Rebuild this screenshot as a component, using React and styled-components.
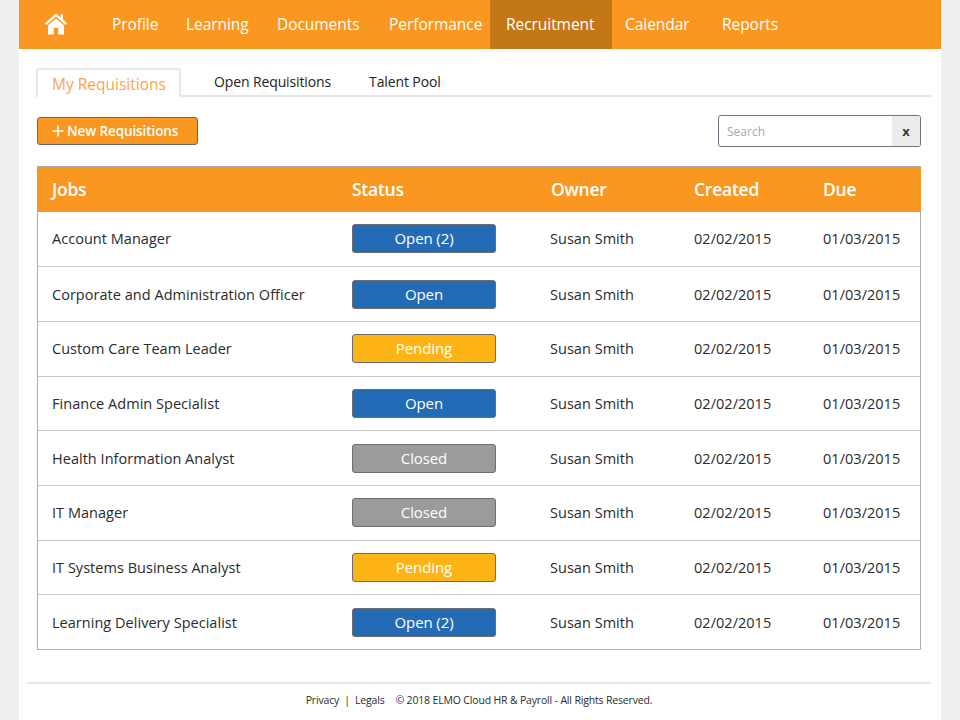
import React from "react";
import styled, { createGlobalStyle } from "styled-components";

const Global = createGlobalStyle`
  html, body { margin: 0; padding: 0; height: 720px; overflow: hidden; background: #efefef; }
  body { font-family: "Open Sans", "Noto Sans", "Liberation Sans", sans-serif; color: #2b2b2b; }
`;
const Page = styled.div`
  width: 922px; height: 720px; margin: 0 auto; background: #fff; display: flex; flex-direction: column;
`;
const Nav = styled.nav`
  height: 48.5px; background: #f99721; display: flex; flex: none;
`;
const HomeLink = styled.a`
  width: 79px; display: flex; align-items: center; padding-left: 26px; box-sizing: border-box; margin-top: -1px;
`;
const NavItem = styled.a`
  width: ${p => p.$w}px; box-sizing: border-box; padding-left: ${p => p.$pad}px; display: flex; align-items: center;
  color: #fff; font-size: 15.5px; letter-spacing: -0.05px; white-space: nowrap;
  background: ${p => (p.$active ? "#c47717" : "transparent")};
`;
const Main = styled.main`
  flex: 1; padding: 17px 9px 0 17px; display: flex; flex-direction: column;
`;
const Tabs = styled.div`
  display: flex; height: 29px; border-bottom: 2px solid #e6e7e9; align-items: flex-end;
`;
const ActiveTab = styled.div`
  width: 145px; height: 29px; box-sizing: border-box; margin-bottom: -2px; padding: 3px 0 0 14px;
  background: #fff; border: 2px solid #e6e7e9; border-bottom: 0; border-radius: 3px 3px 0 0;
  color: #faa54a; font-size: 15.5px; line-height: 22px; white-space: nowrap;
`;
const Tab = styled.div`
  margin-left: ${p => p.$gap}px; height: 29px; line-height: 31px; font-size: 14px; color: #222; white-space: nowrap;
  letter-spacing: -0.12px;
`;
const Toolbar = styled.div`
  display: flex; justify-content: space-between; align-items: center; height: 32px; margin: 18px 11px 0 1px;
`;
const AddButton = styled.button`
  width: 161px; height: 28px; padding: 0 0 0 14px; display: flex; align-items: center; gap: 3px; margin-top: 1px;
  background: #f99721; border: 1px solid #6f6a60; border-radius: 3px; color: #fff;
  font: 600 13.5px "Open Sans", sans-serif; letter-spacing: -0.1px; white-space: nowrap;
`;
const Search = styled.div`
  width: 203px; height: 32px; box-sizing: border-box; display: flex; border: 1px solid #6b7280; border-radius: 3px; overflow: hidden;
`;
const SearchText = styled.div`
  flex: 1; padding-left: 8px; line-height: 31px; font-size: 12px; color: #a9a9a9;
`;
const Clear = styled.div`
  width: 28px; background: #ececec; color: #3a3a3a; font-size: 13px; font-weight: 700; text-align: center; line-height: 30px;
`;
const Table = styled.div`
  margin: 19px 11px 0 1px; border: 1px solid #adadad; border-top: 1px solid #a8a8a8; flex: none;
`;
const HeadRow = styled.div`
  display: grid; grid-template-columns: 300px 199px 143px 129px 1fr; height: 45px; background: #f99721; margin: 0 -1px 0 -1px;
  align-items: center; padding-bottom: 1px; box-sizing: border-box;
`;
const HeadCell = styled.div`
  padding-left: 15px; color: #fff; font-size: 17.5px; font-weight: 600; letter-spacing: -0.25px;
`;
const Row = styled.div`
  display: grid; grid-template-columns: 300px 198px 144px 129px 1fr; height: 54.7px; box-sizing: border-box; align-items: center;
  border-top: ${p => (p.$first ? "0" : "1px solid #c9c9c9")};
`;
const Cell = styled.div`
  padding-left: 14px; font-size: 14.5px; color: #2b2b2b; white-space: nowrap; letter-spacing: 0.03px;
`;
const tones = { open: "#236bb5", pending: "#fdb515", closed: "#9b9b9b" };
const Pill = styled.div`
  width: 144px; height: 29px; box-sizing: border-box; border: 1px solid #6d6d6d; border-radius: 3px;
  background: ${p => tones[p.$tone]}; color: #fff; font-size: 15px; line-height: 27px; text-align: center; letter-spacing: -0.1px;
`;
const Footer = styled.footer`
  margin: 32px 1px 0 -9px; border-top: 2px solid #e6e6e6; padding-top: 9px; display: flex; justify-content: center;
  font-size: 10.5px; color: #2b2b2b; line-height: 14px; white-space: nowrap; letter-spacing: -0.17px;
`;
const FooterLinks = styled.span`
  margin-right: 11px;
`;

const HomeIcon = () => (
  <svg width="22" height="22" viewBox="0 0 22 22" fill="#fff" aria-hidden="true">
    <path d="M11 0.5 L15.5 4.4 V1.5 H18 V6.6 L22 10.2 L20.6 11.9 L11 3.6 L1.4 11.9 L0 10.2 Z" />
    <path d="M11 5.4 L19 12.3 V21.5 H13.2 V14.8 H8.8 V21.5 H3 V12.3 Z" />
  </svg>
);

const navItems = [
  ["Profile", 74, 14],
  ["Learning", 91, 14],
  ["Documents", 112, 14],
  ["Performance", 115, 14],
  ["Recruitment", 122, 16, true],
  ["Calendar", 97, 13],
  ["Reports", 100, 13],
];
const rows = [
  ["Account Manager", "open", "Open (2)"],
  ["Corporate and Administration Officer", "open", "Open"],
  ["Custom Care Team Leader", "pending", "Pending"],
  ["Finance Admin Specialist", "open", "Open"],
  ["Health Information Analyst", "closed", "Closed"],
  ["IT Manager", "closed", "Closed"],
  ["IT Systems Business Analyst", "pending", "Pending"],
  ["Learning Delivery Specialist", "open", "Open (2)"],
];

export default function App() {
  return (
    <Page>
      <Global />
      <Nav>
        <HomeLink><HomeIcon /></HomeLink>
        {navItems.map(([label, w, pad, active]) => (
          <NavItem key={label} $w={w} $pad={pad} $active={active}>{label}</NavItem>
        ))}
      </Nav>
      <Main>
        <Tabs>
          <ActiveTab>My Requisitions</ActiveTab>
          <Tab $gap={33}>Open Requisitions</Tab>
          <Tab $gap={38}>Talent Pool</Tab>
        </Tabs>
        <Toolbar>
          <AddButton><svg width="12" height="12" viewBox="0 0 12 12" aria-hidden="true"><path d="M6 0.5V11.5M0.5 6H11.5" stroke="#fff" strokeWidth="1.6" /></svg>New Requisitions</AddButton>
          <Search><SearchText>Search</SearchText><Clear>x</Clear></Search>
        </Toolbar>
        <Table>
          <HeadRow>
            {["Jobs", "Status", "Owner", "Created", "Due"].map(h => <HeadCell key={h}>{h}</HeadCell>)}
          </HeadRow>
          {rows.map(([job, tone, label], i) => (
            <Row key={job} $first={i === 0}>
              <Cell>{job}</Cell>
              <Cell><Pill $tone={tone}>{label}</Pill></Cell>
              <Cell>Susan Smith</Cell>
              <Cell>02/02/2015</Cell>
              <Cell>01/03/2015</Cell>
            </Row>
          ))}
        </Table>
        <Footer>
          <FooterLinks>Privacy&nbsp; | &nbsp;Legals</FooterLinks>
          <span>© 2018 ELMO Cloud HR &amp; Payroll - All Rights Reserved.</span>
        </Footer>
      </Main>
    </Page>
  );
}
